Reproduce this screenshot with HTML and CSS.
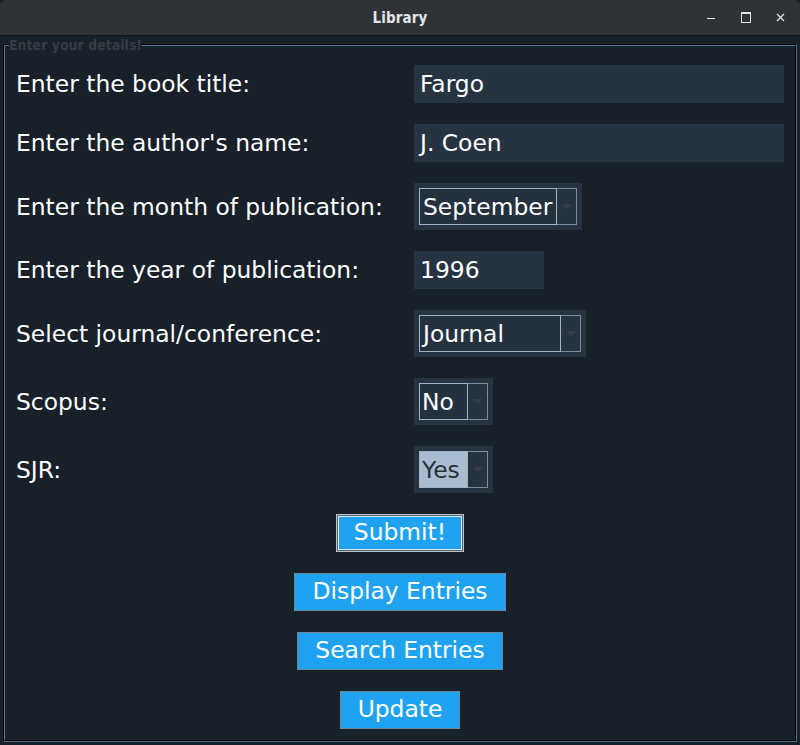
FILE: index.html
```html
<!DOCTYPE html>
<html>
<head>
<meta charset="utf-8">
<title>Library</title>
<link rel="stylesheet" href="styles.css">
</head>
<body>
<div class="window">
  <header class="titlebar">
    <span class="title">Library</span>
    <div class="controls">
      <span class="ctl ctl-min"></span>
      <span class="ctl ctl-max"></span>
      <span class="ctl ctl-close">
        <svg width="9" height="9" viewBox="0 0 9 9"><path d="M1 1 L8 8 M8 1 L1 8" stroke="#d8dcdf" stroke-width="1.4"/></svg>
      </span>
    </div>
  </header>
  <div class="content">
    <fieldset class="frame">
      <legend class="legend">Enter your details!</legend>
      <div class="form">
        <label class="label">Enter the book title:</label>
        <div class="entry entry-wide">Fargo</div>

        <label class="label">Enter the author's name:</label>
        <div class="entry entry-wide">J. Coen</div>

        <label class="label">Enter the month of publication:</label>
        <div class="combo"><span class="field field-month">September</span><span class="arrow"></span></div>

        <label class="label">Enter the year of publication:</label>
        <div class="entry entry-year">1996</div>

        <label class="label">Select journal/conference:</label>
        <div class="combo"><span class="field field-journal">Journal</span><span class="arrow"></span></div>

        <label class="label">Scopus:</label>
        <div class="combo"><span class="field field-small">No</span><span class="arrow"></span></div>

        <label class="label">SJR:</label>
        <div class="combo"><span class="field field-small field-selected">Yes</span><span class="arrow"></span></div>

        <div class="buttons">
          <button class="btn btn-focus">Submit!</button>
          <button class="btn">Display Entries</button>
          <button class="btn">Search Entries</button>
          <button class="btn">Update</button>
        </div>
      </div>
    </fieldset>
  </div>
</div>
</body>
</html>
```

FILE: styles.css
```css
* { box-sizing: border-box; }
html, body {
  margin: 0;
  padding: 0;
  background: #18202a;
}
.window {
  width: 800px;
  height: 745px;
  display: flex;
  flex-direction: column;
  background: #18202a;
  overflow: hidden;
}
.titlebar {
  height: 36px;
  flex: none;
  background: #2f3337;
  border-bottom: 1px solid #121518;
  border-radius: 6px 6px 0 0;
  display: flex;
  align-items: center;
  justify-content: center;
  position: relative;
}
.title {
  font-family: "DejaVu Sans Condensed", "DejaVu Sans", sans-serif;
  font-weight: bold;
  font-size: 15px;
  color: #e2e5e8;
  letter-spacing: 0.1px;
}
.controls {
  position: absolute;
  right: 12px;
  top: 0;
  height: 35px;
  display: flex;
  align-items: center;
  gap: 20px;
}
.ctl {
  width: 15px;
  height: 15px;
  display: flex;
  align-items: center;
  justify-content: center;
}
.ctl-min::before {
  content: "";
  width: 8px;
  height: 1.5px;
  background: #e0e3e6;
  margin-top: 2px;
}
.ctl-max::before {
  content: "";
  width: 8px;
  height: 8px;
  border: 1.5px solid #e0e3e6;
  border-top-width: 2px;
}
.content {
  flex: 1;
  padding: 2px 3px 3px 3px;
  display: flex;
}
.frame {
  flex: 1;
  margin: 0;
  padding: 0 0 0 11px;
  border: 2px groove #2a3a4b;
  border-color: #26384a #1f2d3b #1f2d3b #26384a;
  min-width: 0;
}
.legend {
  font-family: "DejaVu Sans Condensed", "DejaVu Sans", sans-serif;
  font-weight: bold;
  font-size: 14px;
  color: #363c43;
  padding: 0;
  margin-left: -7px;
  line-height: 14px;
}
.form {
  display: grid;
  grid-template-columns: 398px 1fr;
  row-gap: 21px;
  align-items: center;
  padding-top: 13px;
  font-family: "DejaVu Sans", sans-serif;
  font-size: 23.4px;
  color: #ffffff;
}
.label {
  white-space: nowrap;
}
.entry {
  height: 38px;
  background: #263441;
  display: flex;
  align-items: center;
  padding-left: 6px;
  white-space: nowrap;
}
.entry-wide { width: 370px; }
.entry-year { width: 130px; }
.combo {
  justify-self: start;
  display: flex;
  padding: 5px;
  background: #263441;
}
.field {
  height: 37px;
  border: 1px solid #a3b3c4;
  display: flex;
  align-items: center;
  padding-left: 3px;
  white-space: nowrap;
  overflow: hidden;
  background: #243240;
}
.field-month { width: 138px; }
.field-journal { width: 142px; }
.field-small { width: 49px; padding-left: 2px; }
.field-selected {
  background: #a9bcd1;
  color: #2b3036;
}
.arrow {
  width: 20px;
  height: 37px;
  border: 1px solid #7b8b9b;
  border-left: none;
  display: flex;
  align-items: center;
  justify-content: center;
}
.arrow::before {
  content: "";
  width: 0;
  height: 0;
  border-left: 5px solid transparent;
  border-right: 5px solid transparent;
  border-top: 5px solid #343f4a;
}
.buttons {
  grid-column: 1 / -1;
  display: flex;
  flex-direction: column;
  align-items: center;
  gap: 21px;
  margin-right: 11px;
}
.btn {
  height: 38px;
  background: #1fa3f1;
  border: 1px solid #6f8598;
  color: #ffffff;
  font-family: "DejaVu Sans", sans-serif;
  font-size: 23.4px;
  padding: 0 17px;
  line-height: 1;
}
.btn-focus {
  border: 1px solid #b8c3ce;
  box-shadow: inset 0 0 0 1px #56687a, inset 0 0 0 2px #dfe7ee;
}
```
